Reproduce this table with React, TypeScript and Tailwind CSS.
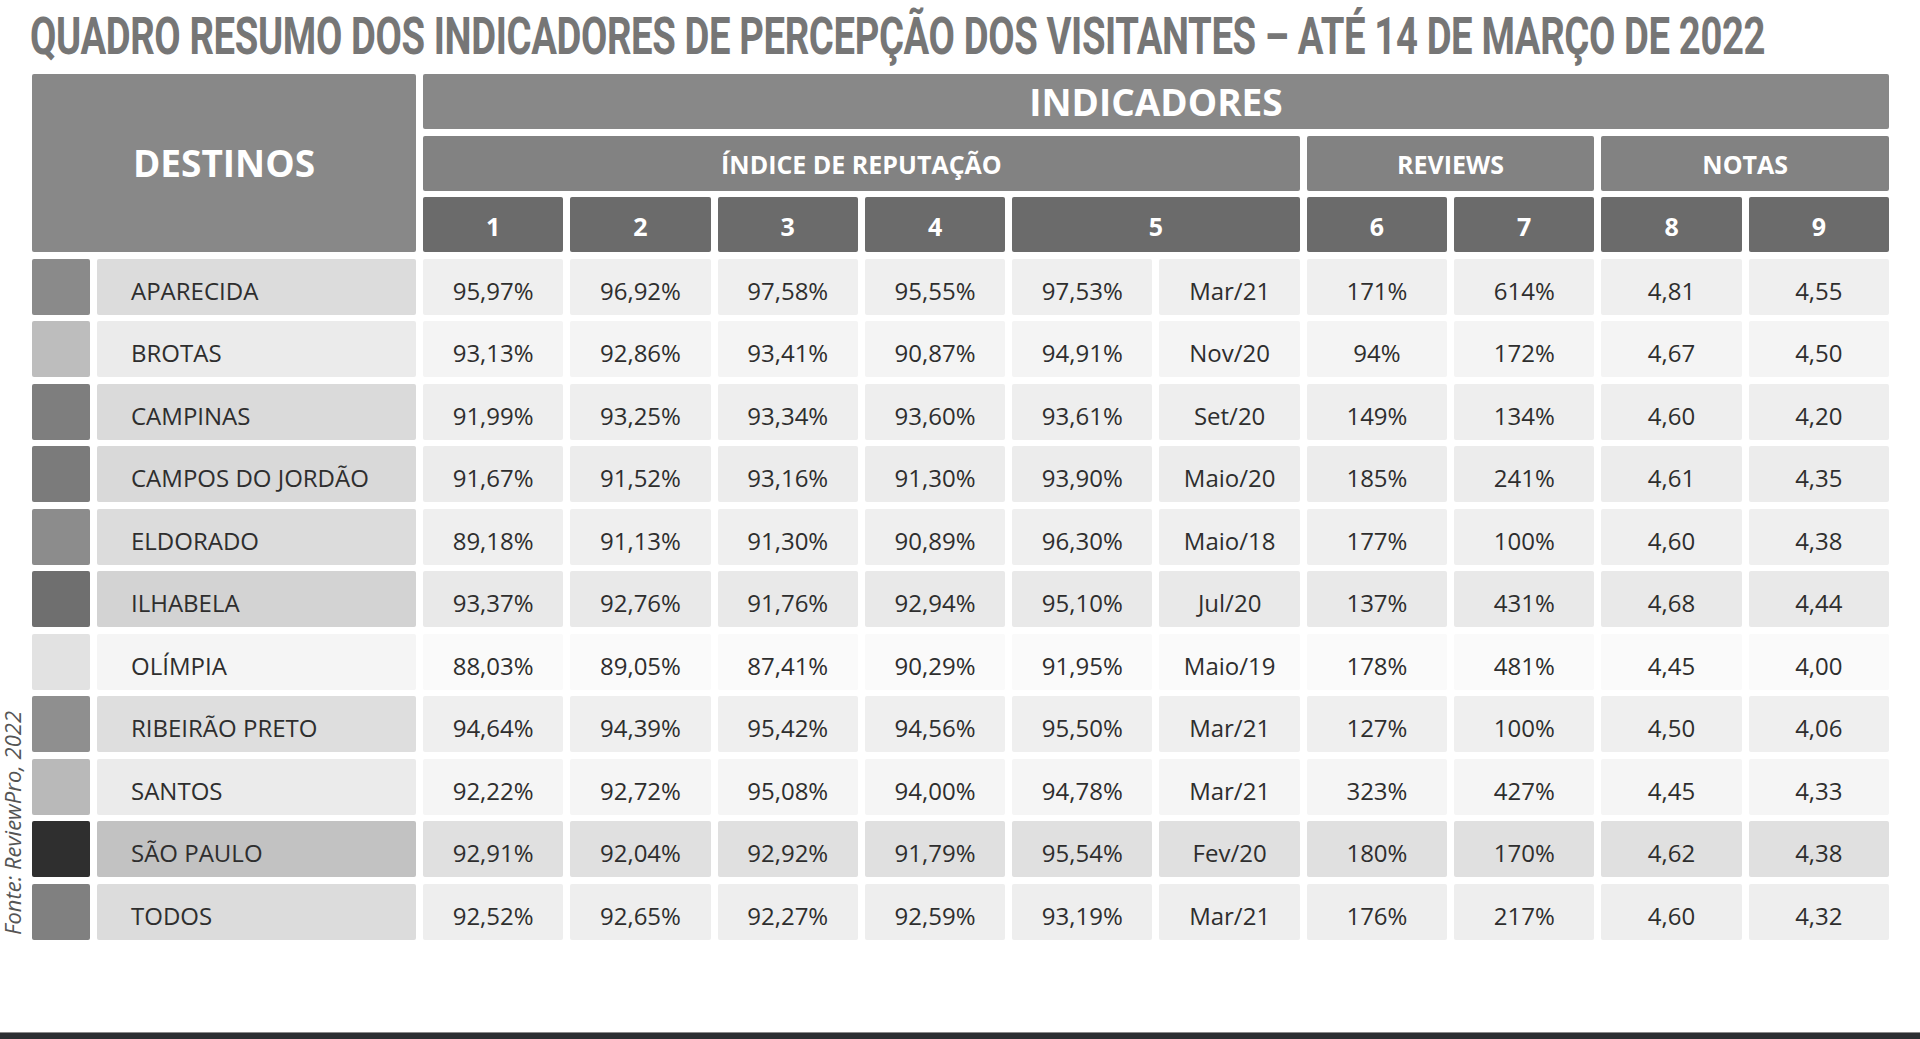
import React from "react";

type Row = {
  name: string;
  square: string;
  nameBg: string;
  cellBg: string;
  values: string[];
};

const rows: Row[] = [
  { name: "APARECIDA", square: "bg-[#8a8a8a]", nameBg: "bg-[#dcdcdc]", cellBg: "bg-[#efefef]", values: ["95,97%", "96,92%", "97,58%", "95,55%", "97,53%", "Mar/21", "171%", "614%", "4,81", "4,55"] },
  { name: "BROTAS", square: "bg-[#bdbdbd]", nameBg: "bg-[#ebebeb]", cellBg: "bg-[#f4f4f4]", values: ["93,13%", "92,86%", "93,41%", "90,87%", "94,91%", "Nov/20", "94%", "172%", "4,67", "4,50"] },
  { name: "CAMPINAS", square: "bg-[#7e7e7e]", nameBg: "bg-[#dadada]", cellBg: "bg-[#eeeeee]", values: ["91,99%", "93,25%", "93,34%", "93,60%", "93,61%", "Set/20", "149%", "134%", "4,60", "4,20"] },
  { name: "CAMPOS DO JORDÃO", square: "bg-[#7b7b7b]", nameBg: "bg-[#d9d9d9]", cellBg: "bg-[#ececec]", values: ["91,67%", "91,52%", "93,16%", "91,30%", "93,90%", "Maio/20", "185%", "241%", "4,61", "4,35"] },
  { name: "ELDORADO", square: "bg-[#8c8c8c]", nameBg: "bg-[#dcdcdc]", cellBg: "bg-[#efefef]", values: ["89,18%", "91,13%", "91,30%", "90,89%", "96,30%", "Maio/18", "177%", "100%", "4,60", "4,38"] },
  { name: "ILHABELA", square: "bg-[#6f6f6f]", nameBg: "bg-[#d3d3d3]", cellBg: "bg-[#e9e9e9]", values: ["93,37%", "92,76%", "91,76%", "92,94%", "95,10%", "Jul/20", "137%", "431%", "4,68", "4,44"] },
  { name: "OLÍMPIA", square: "bg-[#e2e2e2]", nameBg: "bg-[#f5f5f5]", cellBg: "bg-[#fafafa]", values: ["88,03%", "89,05%", "87,41%", "90,29%", "91,95%", "Maio/19", "178%", "481%", "4,45", "4,00"] },
  { name: "RIBEIRÃO PRETO", square: "bg-[#8f8f8f]", nameBg: "bg-[#dedede]", cellBg: "bg-[#efefef]", values: ["94,64%", "94,39%", "95,42%", "94,56%", "95,50%", "Mar/21", "127%", "100%", "4,50", "4,06"] },
  { name: "SANTOS", square: "bg-[#b9b9b9]", nameBg: "bg-[#ebebeb]", cellBg: "bg-[#f5f5f5]", values: ["92,22%", "92,72%", "95,08%", "94,00%", "94,78%", "Mar/21", "323%", "427%", "4,45", "4,33"] },
  { name: "SÃO PAULO", square: "bg-[#2f2f2f]", nameBg: "bg-[#c2c2c2]", cellBg: "bg-[#e0e0e0]", values: ["92,91%", "92,04%", "92,92%", "91,79%", "95,54%", "Fev/20", "180%", "170%", "4,62", "4,38"] },
  { name: "TODOS", square: "bg-[#808080]", nameBg: "bg-[#dcdcdc]", cellBg: "bg-[#eeeeee]", values: ["92,52%", "92,65%", "92,27%", "92,59%", "93,19%", "Mar/21", "176%", "217%", "4,60", "4,32"] },
];

const head = "flex items-center justify-center rounded-[2px] text-white font-bold";

export default function App() {
  return (
    <div className="flex h-[1039px] w-[1920px] flex-col bg-white font-['Open_Sans','Liberation_Sans',sans-serif] text-[#2e2e2e]">
      {/* title: condensed by a horizontal scale */}
      <div className="pl-[30px] pt-[11px]">
        <h1 className="block w-max origin-left scale-x-[0.75] whitespace-nowrap font-['Roboto','Liberation_Sans',sans-serif] text-[51px] font-bold leading-none tracking-[-0.5px] text-[#767676]">
          QUADRO RESUMO DOS INDICADORES DE PERCEPÇÃO DOS VISITANTES – ATÉ 14 DE MARÇO DE 2022
        </h1>
      </div>

      <div className="mt-[12px] flex">
        {/* source note */}
        <div className="flex w-[32px] flex-col justify-end pb-[4px] pl-[1px]">
          <span className="rotate-180 whitespace-nowrap text-[22px] italic leading-[23px] text-[#555555] [writing-mode:vertical-rl]">
            Fonte: ReviewPro, 2022
          </span>
        </div>

        <div className="grid grid-cols-[58px_319px_repeat(10,140.3px)] grid-rows-[55px_55px_55px_repeat(11,56px)] gap-x-[7px] gap-y-[6.5px]">
          <div className={`${head} col-span-2 row-span-3 bg-[#888888] text-[37px]`}>DESTINOS</div>
          <div className={`${head} col-span-10 bg-[#888888] text-[37px]`}>INDICADORES</div>

          <div className={`${head} col-span-6 bg-[#828282] pt-[3px] text-[25px]`}>ÍNDICE DE REPUTAÇÃO</div>
          <div className={`${head} col-span-2 bg-[#828282] pt-[3px] text-[25px]`}>REVIEWS</div>
          <div className={`${head} col-span-2 bg-[#828282] pt-[3px] text-[25px]`}>NOTAS</div>

          {["1", "2", "3", "4"].map((n) => (
            <div key={n} className={`${head} bg-[#6b6b6b] pt-[4px] text-[25px]`}>{n}</div>
          ))}
          <div className={`${head} col-span-2 bg-[#6b6b6b] pt-[4px] text-[25px]`}>5</div>
          {["6", "7", "8", "9"].map((n) => (
            <div key={n} className={`${head} bg-[#6b6b6b] pt-[4px] text-[25px]`}>{n}</div>
          ))}

          {rows.map((r) => (
            <React.Fragment key={r.name}>
              <div className={`rounded-[2px] ${r.square}`} />
              <div className={`flex items-center rounded-[2px] pl-[34px] pt-[8px] text-[24px] ${r.nameBg}`}>{r.name}</div>
              {r.values.map((v, i) => (
                <div key={i} className={`flex items-center justify-center rounded-[2px] pt-[8px] text-[24px] ${r.cellBg}`}>
                  {v}
                </div>
              ))}
            </React.Fragment>
          ))}
        </div>
      </div>

      <div className="flex-1" />
      <div className="h-[7px] border-t border-[#8a8a8a] bg-[#2b2e31]" />
    </div>
  );
}
